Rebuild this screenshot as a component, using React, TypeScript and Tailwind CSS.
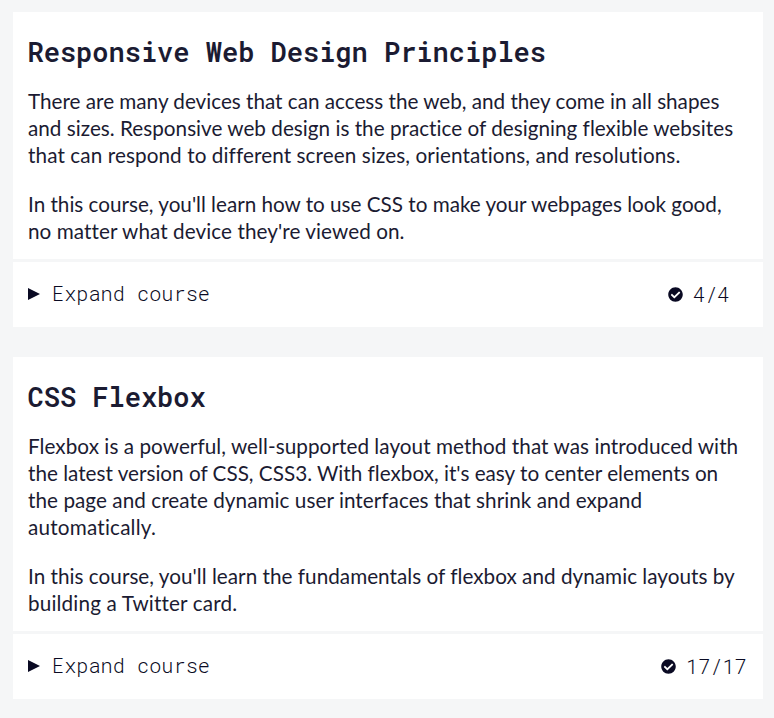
type Line = { text: string; tracking?: string };

type Course = {
  title: string;
  paragraphs: Line[][];
  progress: string;
  statusClass: string;
};

const courses: Course[] = [
  {
    title: "Responsive Web Design Principles",
    paragraphs: [
      [
        { text: "There are many devices that can access the web, and they come in all shapes", tracking: "tracking-[-0.01px]" },
        { text: "and sizes. Responsive web design is the practice of designing flexible websites", tracking: "tracking-[0.015px]" },
        { text: "that can respond to different screen sizes, orientations, and resolutions.", tracking: "tracking-[0.095px]" },
      ],
      [
        { text: "In this course, you'll learn how to use CSS to make your webpages look good,", tracking: "tracking-[-0.01px]" },
        { text: "no matter what device they're viewed on.", tracking: "tracking-[0.07px]" },
      ],
    ],
    progress: "4/4",
    statusClass: "w-[95px]",
  },
  {
    title: "CSS Flexbox",
    paragraphs: [
      [
        { text: "Flexbox is a powerful, well-supported layout method that was introduced with", tracking: "tracking-[0.055px]" },
        { text: "the latest version of CSS, CSS3. With flexbox, it's easy to center elements on" },
        { text: "the page and create dynamic user interfaces that shrink and expand", tracking: "tracking-[0.05px]" },
        { text: "automatically.", tracking: "tracking-[0.2px]" },
      ],
      [
        { text: "In this course, you'll learn the fundamentals of flexbox and dynamic layouts by", tracking: "tracking-[0.025px]" },
        { text: "building a Twitter card.", tracking: "tracking-[0.16px]" },
      ],
    ],
    progress: "17/17",
    statusClass: "w-[102px]",
  },
];

function CheckIcon() {
  return (
    <svg viewBox="0 0 512 512" className="size-[15px] shrink-0 fill-[#0a0a23]" aria-hidden="true">
      <path d="M504 256c0 136.967-111.033 248-248 248S8 392.967 8 256 119.033 8 256 8s248 111.033 248 248zM227.314 387.314l184-184c6.248-6.248 6.248-16.379 0-22.627l-22.627-22.627c-6.248-6.249-16.379-6.249-22.628 0L216 308.118l-70.059-70.059c-6.248-6.248-16.379-6.248-22.628 0l-22.627 22.627c-6.248 6.248-6.248 16.379 0 22.627l104 104c6.249 6.249 16.379 6.249 22.628.001z" />
    </svg>
  );
}

function CourseCard({ course }: { course: Course }) {
  return (
    <section className="bg-white">
      <div className="px-[15px] pt-[21px] pb-[14px]">
        <h2 className="-ml-[0.5px] mb-[18px] h-[37px] whitespace-nowrap font-['Roboto_Mono','Liberation_Mono',monospace] text-[27px] leading-[37px] font-semibold">
          {course.title}
        </h2>
        <div className="flex flex-col gap-[22px] font-['Lato',sans-serif] text-[20.7px] leading-[27px] [font-variant-ligatures:no-common-ligatures]">
          {course.paragraphs.map((lines) => (
            <p key={lines[0].text} className="whitespace-nowrap">
              {lines.map((line) => (
                <span key={line.text} className={`block ${line.tracking ?? ""}`}>{line.text}</span>
              ))}
            </p>
          ))}
        </div>
      </div>
      <button className="flex h-[68px] w-full items-center border-t-[3px] border-[#f5f6f7] pl-[15px] text-left font-['Roboto_Mono','Liberation_Mono',monospace] text-[20.25px] font-[350] text-[#0a0a23]">
        <svg viewBox="0 0 12 12" className="mr-3 mb-px h-3 w-3 fill-[#0a0a23]" aria-hidden="true">
          <path d="M0 0 12 6 0 12Z" />
        </svg>
        <span className="mb-0.5">Expand course</span>
        <span className={`ml-auto flex items-center gap-[10px] ${course.statusClass}`}>
          <CheckIcon />
          <span>{course.progress}</span>
        </span>
      </button>
    </section>
  );
}

export default function App() {
  return (
    <main className="flex h-[718px] flex-col gap-[30px] overflow-hidden bg-[#f5f6f7] pt-3 pr-[11px] pl-[13px] text-[#1b1b32]">
      {courses.map((course) => (
        <CourseCard key={course.title} course={course} />
      ))}
    </main>
  );
}
